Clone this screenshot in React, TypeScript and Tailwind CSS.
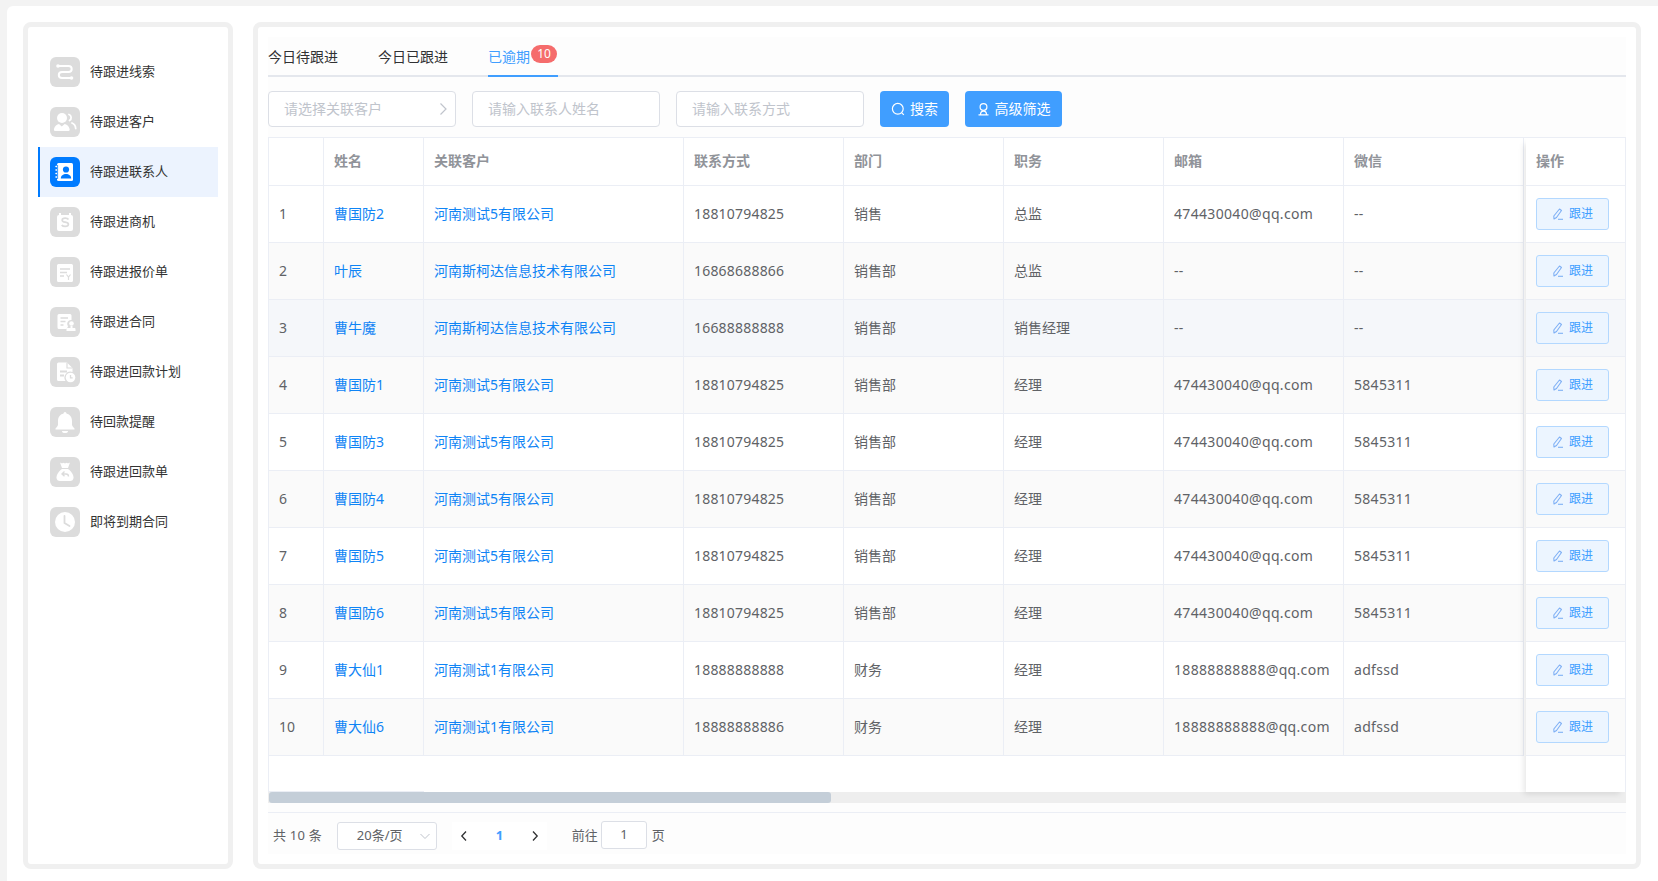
import React from "react";

const FONT = { fontFamily: '"Noto Sans", "Noto Sans CJK SC", sans-serif' };

const W = { fill: "#fff" };
const S = { fill: "none", stroke: "#fff", strokeWidth: 2, strokeLinecap: "round" as const, strokeLinejoin: "round" as const };

function Ico({ c, active }: { c: React.ReactNode; active?: boolean }) {
  return (
    <div className={"w-[30px] h-[30px] rounded-[6px] shrink-0 " + (active ? "bg-[#007bff]" : "bg-[#dcdcdc]")}>
      <svg width="30" height="30" viewBox="0 0 30 30">{c}</svg>
    </div>
  );
}

const icons: React.ReactNode[] = [
  <g key="a">
    <path {...S} d="M9 9h9.500c2 0 3.200 1.200 3.200 3s-1.200 3-3.200 3H12c-2 0-3.200 1.200-3.200 3s1.200 3 3.200 3h8" />
    <circle cx="8" cy="9" r="1.800" {...W} />
    <circle cx="21.500" cy="21" r="1.800" {...W} />
  </g>,
  <g key="b">
    <circle cx="12" cy="11" r="5" {...W} />
    <path {...W} d="M5 24c-1 0-1.200-1-1-2 .6-2.800 3-4.600 5-5l2.800 2.500 2.800-2.500c2 .4 4.400 2.200 5 5 .2 1-.1 2-1 2z" />
    <path {...S} strokeWidth="1.800" d="M19 7.500c2.500.8 3 4.500.5 6M22 16c2 .8 3.500 2.800 3.700 5.500" />
  </g>,
  <g key="c">
    <path {...W} d="M8.500 6h13a1.500 1.500 0 0 1 1.500 1.500v15a1.500 1.500 0 0 1-1.500 1.500h-13A1.500 1.500 0 0 1 7 22.500v-15A1.500 1.500 0 0 1 8.500 6z" />
    <path d="M6 9.500h3M6 13h3M6 16.500h3M6 20h3" stroke="#fff" strokeWidth="1.500" strokeLinecap="round" />
    <path d="M7.600 8v14" stroke="#007bff" strokeWidth="0.800" />
    <circle cx="16" cy="12.500" r="3.100" fill="#007bff" />
    <path fill="#007bff" d="M10.800 21.500c0-2.800 2.400-4.500 5.200-4.500s5.200 1.700 5.200 4.500z" />
  </g>,
  <g key="d">
    <rect x="7" y="8" width="16" height="16" rx="2" {...W} />
    <path d="M10 6v3M20 6v3" stroke="#fff" strokeWidth="2" />
    <path d="M18.500 12.500c-.6-.9-1.900-1.300-3.300-1.300-1.800 0-3 .8-3 2s1.100 1.700 3 2 3.200.9 3.200 2.100-1.400 2.100-3.200 2.100c-1.500 0-2.800-.5-3.500-1.500" fill="none" stroke="#dcdcdc" strokeWidth="1.700" />
  </g>,
  <g key="e">
    <path {...W} d="M8.500 7h13A1.500 1.500 0 0 1 23 8.500v15a1.500 1.500 0 0 1-1.500 1.500h-13A1.500 1.500 0 0 1 7 23.500v-15A1.500 1.500 0 0 1 8.500 7z" />
    <path d="M10 12h10M10 15.500h7M10 19h4" stroke="#dcdcdc" strokeWidth="1.500" />
    <path d="M16.500 17.500l2 2.500 2-2.500M18.500 20v3" fill="none" stroke="#dcdcdc" strokeWidth="1.200" />
  </g>,
  <g key="f">
    <path {...W} d="M9 7h11a1.500 1.500 0 0 1 1.500 1.500V13a4 4 0 0 0-3.500 6.500L16.500 22H9a1.500 1.500 0 0 1-1.500-1.500v-12A1.500 1.500 0 0 1 9 7z" />
    <path d="M10.500 11h7.500M10.500 14.500h5M10.500 18h3" stroke="#dcdcdc" strokeWidth="1.500" />
    <circle cx="21.500" cy="16.500" r="2.300" {...W} />
    <path {...W} d="M20.500 19h2v2h1.800c.8 0 1.200.5 1.200 1.200V24h-9v-1.800c0-.7.500-1.200 1.200-1.200h2.800z" />
  </g>,
  <g key="g">
    <path {...W} d="M8.500 5.500H17l5.500 5.500v4a6 6 0 0 0-7 9h-7A1.500 1.500 0 0 1 7 22.500V7A1.500 1.500 0 0 1 8.500 5.500z" />
    <path d="M17 5.500V11h5.500" fill="none" stroke="#dcdcdc" strokeWidth="1.200" />
    <path d="M10 14.500h7M10 18.500h4" stroke="#dcdcdc" strokeWidth="1.800" />
    <circle cx="20.500" cy="20.500" r="4.800" {...W} />
    <path d="M20.500 18v2.800h2.200" fill="none" stroke="#dcdcdc" strokeWidth="1.300" />
  </g>,
  <g key="h">
    <circle cx="15" cy="6.500" r="1.500" {...W} />
    <path {...W} d="M15 6.500c4.500 0 7 3.200 7 7.500v3.500c0 1.500 1.200 2.800 2.500 4v1H5.500v-1c1.300-1.200 2.500-2.500 2.500-4V14c0-4.300 2.500-7.500 7-7.500z" />
    <path {...W} d="M12 24h6a3 2 0 0 1-6 0z" />
  </g>,
  <g key="i">
    <path {...W} d="M10 5.500c1.200 1 2.200 1 3.300.2 1.100.8 2.300.8 3.400 0 1.100.8 2.100.8 3.300-.2l-2 5.500h-6z" />
    <path {...W} d="M12 12h6c3 2 5.500 5.500 5.500 8.500 0 2.500-1.500 3.500-3.500 3.500H10c-2 0-3.500-1-3.500-3.500 0-3 2.500-6.500 5.500-8.500z" />
    <path d="M14.500 14.500L12 17l2.500 2.300M12.500 17h3.500c1.600 0 2.500 1 2.500 2.500" fill="none" stroke="#dcdcdc" strokeWidth="1.400" />
  </g>,
  <g key="j">
    <circle cx="15" cy="15" r="10" {...W} />
    <path d="M14.500 9v7l5 3" fill="none" stroke="#dcdcdc" strokeWidth="1.800" strokeLinecap="round" />
  </g>,
];

const menu = ["待跟进线索", "待跟进客户", "待跟进联系人", "待跟进商机", "待跟进报价单", "待跟进合同", "待跟进回款计划", "待回款提醒", "待跟进回款单", "即将到期合同"];

const rows = [
  ["曹国防2", "河南测试5有限公司", "18810794825", "销售", "总监", "474430040@qq.com", "--"],
  ["叶辰", "河南斯柯达信息技术有限公司", "16868688866", "销售部", "总监", "--", "--"],
  ["曹牛魔", "河南斯柯达信息技术有限公司", "16688888888", "销售部", "销售经理", "--", "--"],
  ["曹国防1", "河南测试5有限公司", "18810794825", "销售部", "经理", "474430040@qq.com", "5845311"],
  ["曹国防3", "河南测试5有限公司", "18810794825", "销售部", "经理", "474430040@qq.com", "5845311"],
  ["曹国防4", "河南测试5有限公司", "18810794825", "销售部", "经理", "474430040@qq.com", "5845311"],
  ["曹国防5", "河南测试5有限公司", "18810794825", "销售部", "经理", "474430040@qq.com", "5845311"],
  ["曹国防6", "河南测试5有限公司", "18810794825", "销售部", "经理", "474430040@qq.com", "5845311"],
  ["曹大仙1", "河南测试1有限公司", "18888888888", "财务", "经理", "18888888888@qq.com", "adfssd"],
  ["曹大仙6", "河南测试1有限公司", "18888888886", "财务", "经理", "18888888888@qq.com", "adfssd"],
];

const heads = ["", "姓名", "关联客户", "联系方式", "部门", "职务", "邮箱", "微信"];
const widths = [55, 100, 260, 160, 160, 160, 180, 180];

function rowBg(i: number) {
  if (i === 2) return "bg-[#f5f7fa]";
  return i % 2 === 1 ? "bg-[#fafafa]" : "bg-white";
}

function cellTone(j: number) {
  if (j < 2) return "text-[#0f84f5]";
  if (j === 2) return "tracking-[0.2px]";
  if (j === 5) return "tracking-[0.33px]";
  if (j === 6) return "tracking-[0.3px]";
  return "";
}

function Pencil() {
  return (
    <svg width="12" height="12" viewBox="0 0 12 12" fill="none" stroke="#7fb0f5" strokeWidth="1.100">
      <path d="M7.500 1L9.500 2.500L4.500 9.500L2 11L1.800 8z" strokeLinejoin="round" />
      <path d="M6 11.300h5" />
    </svg>
  );
}

function Field({ text, arrow }: { text: string; arrow?: boolean }) {
  return (
    <div className="w-[188px] h-9 border border-[#dcdfe6] rounded-[4px] bg-white flex items-center justify-between pl-[15px] pr-[6px] text-sm text-[#c0c4cc]">
      <span>{text}</span>
      {arrow && (
        <svg width="12" height="14" viewBox="0 0 12 14" fill="none" stroke="#c0c4cc" strokeWidth="1.200">
          <path d="M3.500 1.500L9 7l-5.500 5.500" />
        </svg>
      )}
    </div>
  );
}

export default function App() {
  return (
    <div style={FONT} className="w-full h-[881px] bg-[#f3f3f3] pl-[7px] pt-[6px] overflow-hidden">
      <div className="h-full bg-white rounded-tl-[6px] flex gap-5 pl-4 pt-4 pb-3 pr-[17px]">
        <aside className="w-[210px] border-[5px] border-[#f0f0f0] rounded-[8px] bg-white pt-5 px-[10px] shrink-0">
          {menu.map((m, i) => {
            const active = i === 2;
            return (
              <div
                key={m}
                className={"h-[50px] flex items-center gap-[10px] text-[13px] text-[#333] " + (active ? "bg-[#ecf3fe] border-l-2 border-[#007bff] pl-[10px]" : "pl-3")}
              >
                <Ico c={icons[i]} active={active} />
                <span>{m}</span>
              </div>
            );
          })}
        </aside>

        <main className="flex-1 min-w-0 border-[5px] border-[#f0f0f0] rounded-[8px] bg-white p-[10px]">
          <div className="h-full bg-[#fdfdfd] flex flex-col">
            <div className="h-10 border-b-2 border-[#e4e7ed] flex gap-10 text-sm text-[#303133] shrink-0">
              <div className="flex items-center pt-[2px]">今日待跟进</div>
              <div className="flex items-center pt-[2px]">今日已跟进</div>
              <div className="relative w-[70px] h-10 flex items-center border-b-2 border-[#409eff] text-[#409eff] pt-[2px]">
                已逾期
                <span className="absolute left-[43px] top-2 w-[26px] h-[18px] rounded-full bg-[#f56c6c] text-white text-xs flex items-center justify-center">10</span>
              </div>
            </div>

            <div className="mt-[14px] flex gap-4 shrink-0">
              <Field text="请选择关联客户" arrow />
              <Field text="请输入联系人姓名" />
              <Field text="请输入联系方式" />
              <button className="w-[69px] h-9 rounded-[4px] bg-[#409eff] text-white text-sm flex items-center justify-center gap-[5px]">
                <svg width="14" height="14" viewBox="0 0 14 14" fill="none" stroke="#fff" strokeWidth="1.200">
                  <circle cx="6.800" cy="6.800" r="5.400" />
                  <path d="M10.800 10.800l2 2" />
                </svg>
                搜索
              </button>
              <button className="w-[97px] h-9 rounded-[4px] bg-[#409eff] text-white text-sm flex items-center justify-center gap-[5px]">
                <svg width="13" height="14" viewBox="0 0 13 14" fill="none" stroke="#fff" strokeWidth="1.200">
                  <circle cx="6.500" cy="5" r="3.400" />
                  <path d="M1.500 12.800h10M3.500 12.800c0-2 1-3.600 3-3.600s3 1.600 3 3.600" />
                </svg>
                高级筛选
              </button>
            </div>

            <div className="mt-[10px] flex-none relative">
              <div className="flex h-[655px] bg-white border-t border-l border-[#ebeef5]">
                <div className="flex-1 min-w-0 overflow-hidden">
                  <table className="table-fixed border-separate border-spacing-0 text-sm text-[#606266]" style={{ width: 1255 }}>
                    <colgroup>
                      {widths.map((w, i) => (
                        <col key={i} style={{ width: w }} />
                      ))}
                    </colgroup>
                    <thead>
                      <tr className="h-[48px]">
                        {heads.map((h, i) => (
                          <th key={i} className="border-r border-b border-[#ebeef5] px-[10px] pb-[2px] text-left font-bold text-[#909399]">
                            {h}
                          </th>
                        ))}
                      </tr>
                    </thead>
                    <tbody>
                      {rows.map((r, i) => (
                        <tr key={i} className={"h-[57px] " + rowBg(i)}>
                          <td className="border-r border-b border-[#ebeef5] px-[10px]">{i + 1}</td>
                          {r.map((c, j) => (
                            <td key={j} className={"border-r border-b border-[#ebeef5] px-[10px] whitespace-nowrap " + cellTone(j)}>
                              {c}
                            </td>
                          ))}
                        </tr>
                      ))}
                    </tbody>
                  </table>
                  <div className="mt-[35px] w-[155px] border-b border-[#ebeef5]" />
                </div>

                <div className="w-[100px] shrink-0 bg-white border-r border-[#ebeef5] shadow-[-4px_4px_6px_-2px_rgba(0,0,0,0.1)] relative z-10 text-sm">
                  <div className="h-[48px] border-b border-[#ebeef5] px-[10px] pb-[2px] flex items-center font-bold text-[#909399]">操作</div>
                  {rows.map((_, i) => (
                    <div key={i} className={"h-[57px] border-b border-[#ebeef5] px-[10px] flex items-center " + rowBg(i)}>
                      <button className="w-[73px] h-8 rounded-[3px] border border-[#b3d8ff] bg-[#ecf5ff] text-[#409eff] text-xs flex items-center justify-center gap-[5px]">
                        <Pencil />
                        跟进
                      </button>
                    </div>
                  ))}
                </div>
              </div>
              <div className="h-[11px] bg-[#eeeeee] pl-px">
                <div className="h-full w-[562px] rounded-[3px] bg-[#c4ced8]" />
              </div>
            </div>

            <div className="mt-[9px] border-t border-[#ebeef5] flex items-start pt-[9px] pl-[5px] text-[13px] text-[#606266] shrink-0">
              <span className="leading-[26px] tracking-[0.2px]">共 10 条</span>
              <div className="ml-[15px] w-[100px] h-7 bg-white border border-[#dcdfe6] rounded-[3px] flex items-center justify-between pl-[19px] pr-[5px]">
                <span>20条/页</span>
                <svg width="12" height="12" viewBox="0 0 12 12" fill="none" stroke="#c0c4cc" strokeWidth="1">
                  <path d="M1.500 4L6 8.500 10.500 4" />
                </svg>
              </div>
              <div className="ml-[15px] w-[95px] h-7 bg-white flex items-center justify-between px-[8px]">
                <svg width="8" height="12" viewBox="0 0 8 12" fill="none" stroke="#303133" strokeWidth="1.300">
                  <path d="M6 1.500L1.800 6 6 10.500" />
                </svg>
                <span className="font-bold text-[#409eff]">1</span>
                <svg width="8" height="12" viewBox="0 0 8 12" fill="none" stroke="#303133" strokeWidth="1.300">
                  <path d="M2 1.500L6.200 6 2 10.500" />
                </svg>
              </div>
              <span className="ml-[25px] leading-[26px]">前往</span>
              <div className="ml-[3px] -mt-px w-[46px] h-7 bg-white border border-[#dcdfe6] rounded-[3px] flex items-center justify-center">1</div>
              <span className="ml-[5px] leading-[26px]">页</span>
            </div>
          </div>
        </main>
      </div>
    </div>
  );
}
